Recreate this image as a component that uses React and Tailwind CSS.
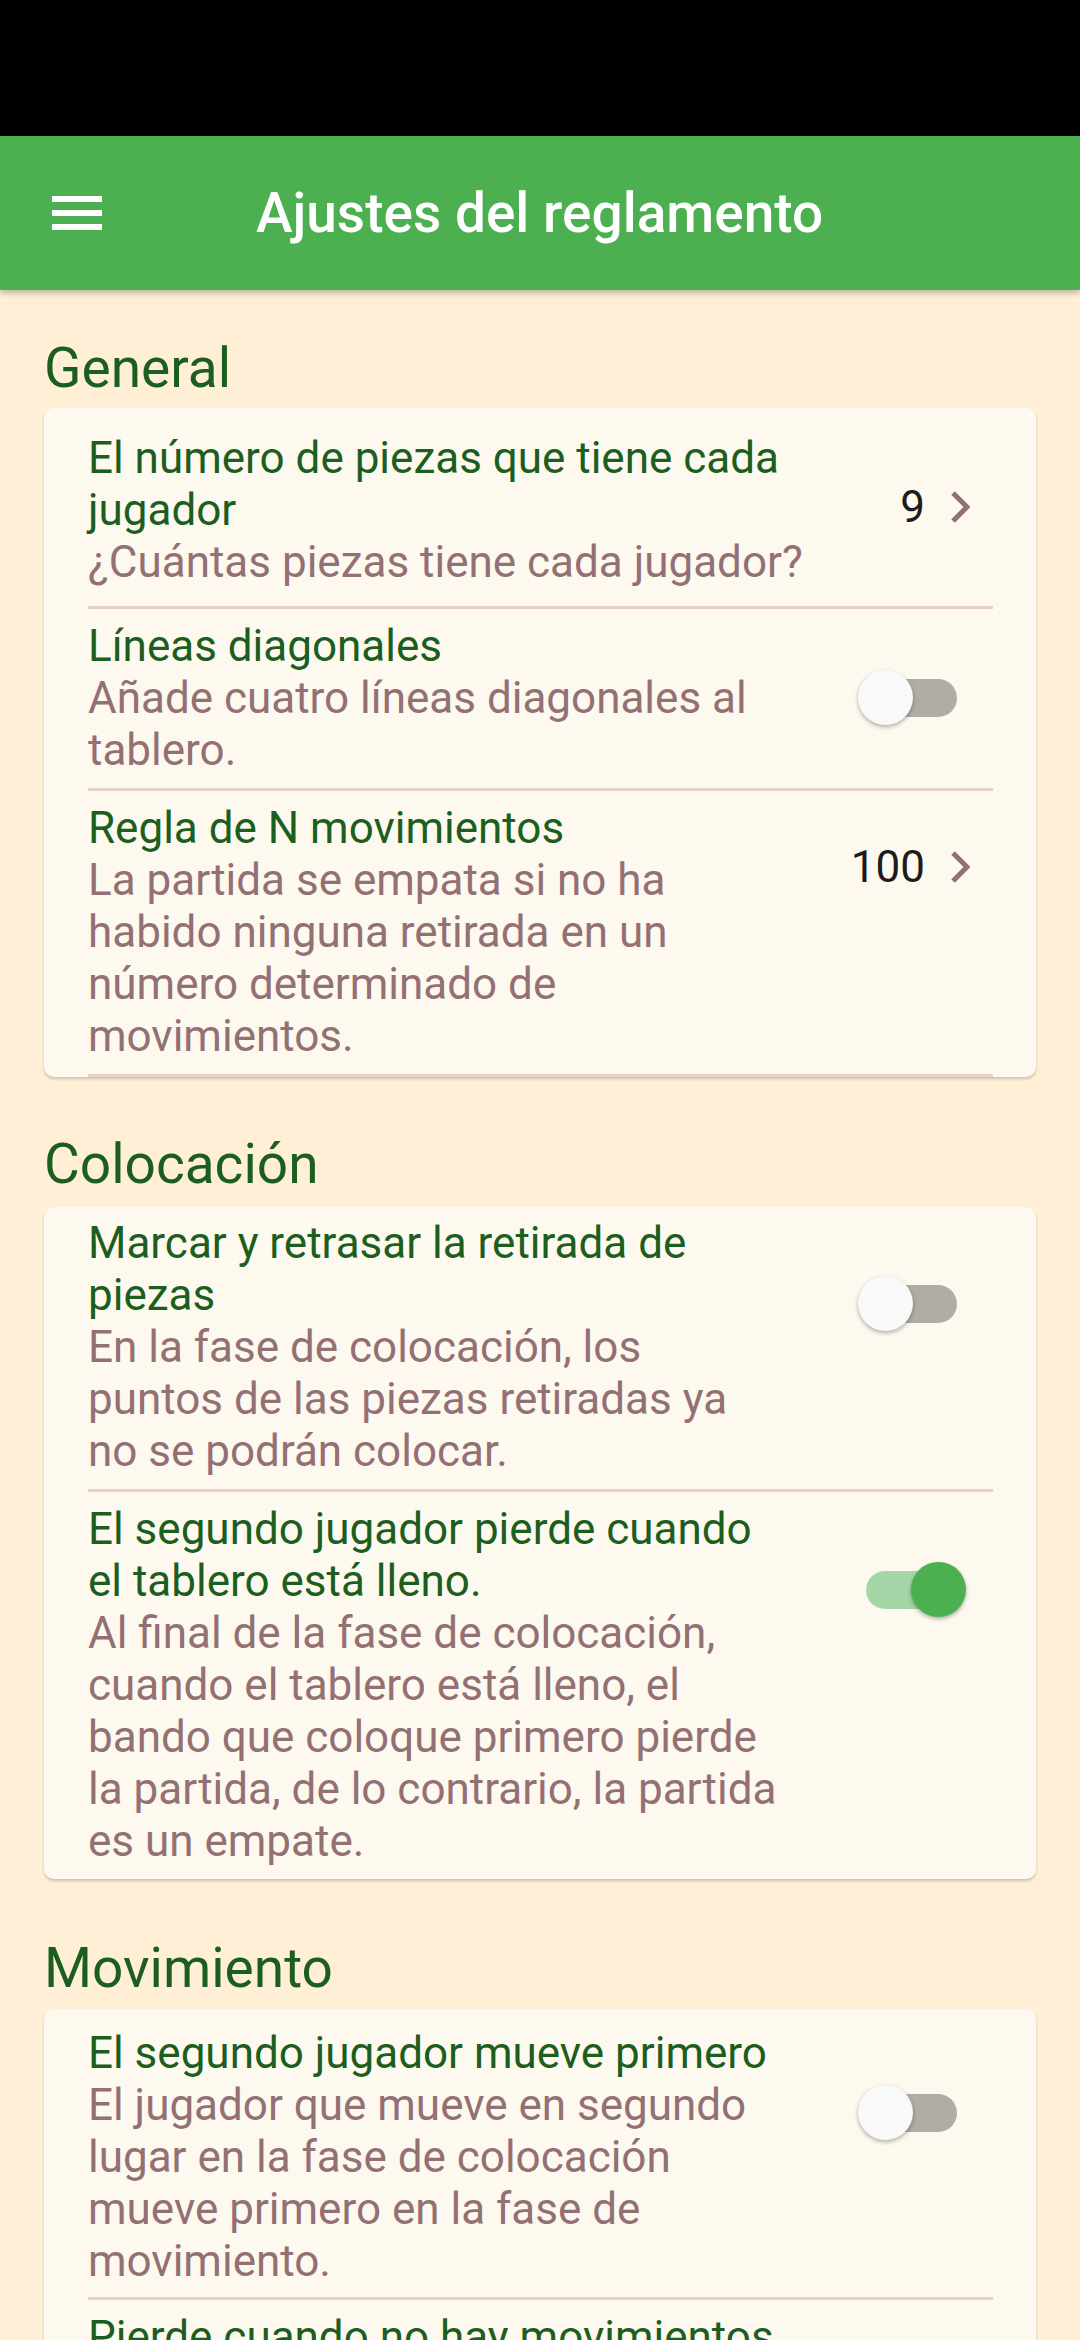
import React from "react";

// Settings list for the rule page
const sections = [
  {
    title: "General",
    headClass: "mt-[45px] mb-[7px]",
    items: [
      {
        title: ["El número de piezas que tiene cada", "jugador"],
        sub: ["¿Cuántas piezas tiene cada jugador?"],
        value: "9",
        pad: "pt-[24px] pb-[18px]",
        trail: "mt-[49px]",
        divider: true,
      },
      {
        title: ["Líneas diagonales"],
        sub: ["Añade cuatro líneas diagonales al", "tablero."],
        toggle: false,
        pad: "pt-[11px] pb-[12px]",
        trail: "mt-[50px]",
        divider: true,
      },
      {
        title: ["Regla de N movimientos"],
        sub: [
          "La partida se empata si no ha",
          "habido ninguna retirada en un",
          "número determinado de",
          "movimientos.",
        ],
        value: "100",
        pad: "pt-[11px] pb-[12px]",
        trail: "mt-[39px]",
        divider: true,
      },
    ],
  },
  {
    title: "Colocación",
    headClass: "mt-[54px] mb-[10px]",
    items: [
      {
        title: ["Marcar y retrasar la retirada de", "piezas"],
        sub: [
          "En la fase de colocación, los",
          "puntos de las piezas retiradas ya",
          "no se podrán colocar.",
        ],
        toggle: false,
        pad: "pt-[10px] pb-[12px]",
        trail: "mt-[59px]",
        divider: true,
      },
      {
        title: ["El segundo jugador pierde cuando", "el tablero está lleno."],
        sub: [
          "Al final de la fase de colocación,",
          "cuando el tablero está lleno, el",
          "bando que coloque primero pierde",
          "la partida, de lo contrario, la partida",
          "es un empate.",
        ],
        toggle: true,
        pad: "pt-[11px] pb-[12px]",
        trail: "mt-[59px]",
        divider: false,
      },
    ],
  },
  {
    title: "Movimiento",
    headClass: "mt-[56px] mb-[8px]",
    items: [
      {
        title: ["El segundo jugador mueve primero"],
        sub: [
          "El jugador que mueve en segundo",
          "lugar en la fase de colocación",
          "mueve primero en la fase de",
          "movimiento.",
        ],
        toggle: false,
        pad: "pt-[18px] pb-[10px]",
        trail: "mt-[58px]",
        divider: true,
      },
      {
        title: ["Pierde cuando no hay movimientos"],
        sub: ["Si un jugador no puede mover sus", "piezas, pierde la partida."],
        toggle: true,
        pad: "pt-[11px] pb-[12px]",
        trail: "mt-[50px]",
        divider: false,
      },
    ],
  },
];

function Switch({ on }) {
  if (on) {
    return (
      <div className="relative w-[100px] h-[55px] mr-[27px]">
        <div className="absolute left-0 top-[9px] w-[89px] h-[38px] rounded-full bg-[#a5d6a7]" />
        <div className="absolute right-0 top-0 w-[55px] h-[55px] rounded-full bg-[#4caf50] shadow-[0_2px_4px_rgba(0,0,0,0.3)]" />
      </div>
    );
  }
  return (
    <div className="relative w-[99px] h-[55px] mr-[36px]">
      <div className="absolute left-[10px] top-[9px] w-[89px] h-[38px] rounded-full bg-[#b0ada6]" />
      <div className="absolute left-0 top-0 w-[55px] h-[55px] rounded-full bg-[#f9f9f9] shadow-[0_2px_4px_rgba(0,0,0,0.3)]" />
    </div>
  );
}

function Value({ text }) {
  return (
    <div className="flex items-center gap-[25px] mr-[23px] h-[52px]">
      <span className="text-[#1d1b1b]">{text}</span>
      <svg width="20" height="32" viewBox="0 0 20 32">
        <path d="M3 2 L17 16 L3 30" fill="none" stroke="#8f7074" strokeWidth="5" />
      </svg>
    </div>
  );
}

function Item({ item }) {
  return (
    <div>
      <div className={`flex items-start ${item.pad}`}>
        <div className="flex-1">
          {item.title.map((l) => (
            <div key={l} className="whitespace-nowrap text-[#1b5e20]">
              {l}
            </div>
          ))}
          {item.sub.map((l) => (
            <div key={l} className="whitespace-nowrap text-[#937074]">
              {l}
            </div>
          ))}
        </div>
        <div className={item.trail}>
          {item.value ? <Value text={item.value} /> : <Switch on={item.toggle} />}
        </div>
      </div>
      {item.divider && <div className="h-[3px] bg-[#e8d0cb]" />}
    </div>
  );
}

export default function App() {
  return (
    <div
      className="w-[1080px] h-[2340px] overflow-hidden bg-[#ffefd6] text-[44px] leading-[52px]"
      style={{ fontFamily: "Roboto, 'Noto Sans', sans-serif" }}
    >
      <div className="h-[136px] bg-black" />
      <div className="relative z-10 h-[154px] bg-[#4caf50] flex items-center pl-[52px] shadow-[0_3px_6px_rgba(0,0,0,0.25)]">
        <div className="flex flex-col gap-[8px] w-[50px]">
          <div className="h-[6px] bg-white" />
          <div className="h-[6px] bg-white" />
          <div className="h-[6px] bg-white" />
        </div>
        <h1 className="ml-[154px] text-white text-[55px] leading-none font-medium">
          Ajustes del reglamento
        </h1>
      </div>

      <div className="px-[44px]">
        {sections.map((s) => (
          <section key={s.title}>
            <h2 className={`${s.headClass} text-[55px] leading-[66px] text-[#1b5e20]`}>
              {s.title}
            </h2>
            <div className="bg-[#fef9ee] rounded-[10px] pl-[44px] pr-[43px] shadow-[0_2px_3px_rgba(0,0,0,0.2)]">
              {s.items.map((it) => (
                <Item key={it.title[0]} item={it} />
              ))}
            </div>
          </section>
        ))}
      </div>
    </div>
  );
}
